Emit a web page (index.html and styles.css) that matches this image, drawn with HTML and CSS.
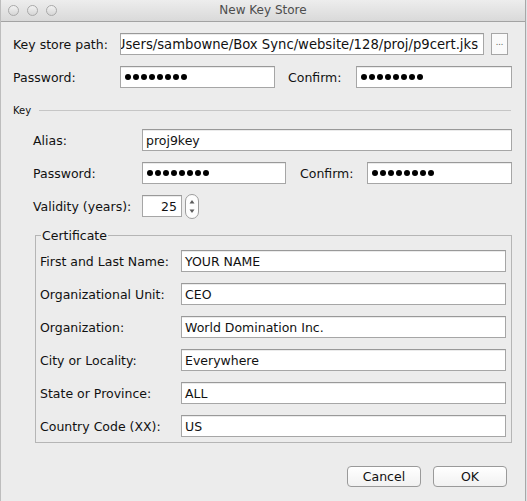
FILE: index.html
```html
<!DOCTYPE html>
<html>
<head>
<meta charset="utf-8">
<title>New Key Store</title>
<link rel="stylesheet" href="styles.css">
</head>
<body>
<div class="window">
  <div class="titlebar">
    <div class="lights"><span class="light"></span><span class="light"></span><span class="light"></span></div>
    <div class="title">New Key Store</div>
  </div>
  <div class="content">
    <div class="row r1">
      <div class="lbl lbl-top">Key store path:</div>
      <div class="field field-path"><span class="path-text">/Users/sambowne/Box Sync/website/128/proj/p9cert.jks</span></div>
      <div class="browse">...</div>
    </div>
    <div class="row r2">
      <div class="lbl lbl-top">Password:</div>
      <div class="field w-pw1"><span class="dots"><i></i><i></i><i></i><i></i><i></i><i></i><i></i><i></i></span></div>
      <div class="lbl lbl-confirm1">Confirm:</div>
      <div class="field w-cf1"><span class="dots"><i></i><i></i><i></i><i></i><i></i><i></i><i></i><i></i></span></div>
    </div>

    <div class="sep">
      <span class="sep-label">Key</span>
      <span class="sep-line"></span>
    </div>

    <div class="key-section">
      <div class="row">
        <div class="lbl lbl-key">Alias:</div>
        <div class="field w-alias">proj9key</div>
      </div>
      <div class="row">
        <div class="lbl lbl-key">Password:</div>
        <div class="field w-pw2"><span class="dots"><i></i><i></i><i></i><i></i><i></i><i></i><i></i><i></i></span></div>
        <div class="lbl lbl-confirm2">Confirm:</div>
        <div class="field w-cf2"><span class="dots"><i></i><i></i><i></i><i></i><i></i><i></i><i></i><i></i></span></div>
      </div>
      <div class="row row-validity">
        <div class="lbl lbl-key">Validity (years):</div>
        <div class="field w-valid">25</div>
        <div class="spinner">
          <svg width="15" height="26" viewBox="0 0 15 26">
            <rect x="0.5" y="0.5" width="13" height="24" rx="6.5" ry="6.5" fill="#fdfdfd" stroke="#9c9c9c"/>
            <path d="M4.5 9.5 L7 6 L9.5 9.5 Z" fill="#5a5a5a"/>
            <path d="M4.5 15.5 L7 19 L9.5 15.5 Z" fill="#5a5a5a"/>
          </svg>
        </div>
      </div>
    </div>

    <fieldset class="cert">
      <legend>Certificate</legend>
      <div class="row"><div class="lbl lbl-cert">First and Last Name:</div><div class="field w-cert">YOUR NAME</div></div>
      <div class="row"><div class="lbl lbl-cert">Organizational Unit:</div><div class="field w-cert">CEO</div></div>
      <div class="row"><div class="lbl lbl-cert">Organization:</div><div class="field w-cert">World Domination Inc.</div></div>
      <div class="row"><div class="lbl lbl-cert">City or Locality:</div><div class="field w-cert">Everywhere</div></div>
      <div class="row"><div class="lbl lbl-cert">State or Province:</div><div class="field w-cert">ALL</div></div>
      <div class="row last"><div class="lbl lbl-cert">Country Code (XX):</div><div class="field w-cert">US</div></div>
    </fieldset>

    <div class="buttons">
      <div class="btn">Cancel</div>
      <div class="btn">OK</div>
    </div>
  </div>
</div>
</body>
</html>
```

FILE: styles.css
```css
html, body {
  margin: 0;
  padding: 0;
}
body {
  background: #dfe3e6;
  font-family: "DejaVu Sans", "Liberation Sans", sans-serif;
  font-size: 12.5px;
  color: #111;
  width: 527px;
  height: 501px;
  overflow: hidden;
}
.window {
  width: 524px;
  height: 501px;
  background: #ececec;
  border-left: 1px solid #bdbdbd;
  border-right: 1px solid #a8a8a8;
  box-sizing: content-box;
}
.titlebar {
  height: 21px;
  border-bottom: 1px solid #a3a3a3;
  background: linear-gradient(#ededed, #d9d9d9);
  display: flex;
  align-items: center;
  position: relative;
}
.lights {
  display: flex;
  gap: 8px;
  padding-left: 7px;
}
.light {
  width: 11px;
  height: 11px;
  border-radius: 50%;
  border: 1px solid #a9a9a9;
  background: linear-gradient(#f2f2f2, #d6d6d6);
  box-sizing: border-box;
}
.title {
  position: absolute;
  left: 0;
  right: 0;
  text-align: center;
  color: #4d4d4d;
  font-size: 12px;
  top: 3px;
}
.content {
  padding: 11px 14px 0 12px;
}
.row {
  display: flex;
  align-items: center;
  height: 22px;
  margin-bottom: 11px;
}
.lbl {
  flex: none;
  white-space: nowrap;
}
.lbl-top { width: 107px; }
.lbl-confirm1 { width: 68px; margin-left: 13px; }
.field {
  flex: none;
  box-sizing: border-box;
  height: 22px;
  background: #fff;
  border: 1px solid #a6a6a6;
  border-top-color: #999;
  box-shadow: inset 0 1px 0 #ebebeb;
  padding: 0 3px;
  display: flex;
  align-items: center;
  white-space: nowrap;
  overflow: hidden;
  font-size: 12.5px;
  color: #111;
}
.field-path {
  width: 364px;
  justify-content: flex-end;
  padding-right: 5px;
  font-size: 13.2px;
}
.browse {
  flex: none;
  width: 17px;
  height: 22px;
  box-sizing: border-box;
  margin-left: 7px;
  border: 1px solid #a6a6a6;
  background: #fafafa;
  font-size: 8px;
  color: #555;
  display: flex;
  align-items: center;
  justify-content: center;
  padding-bottom: 3px;
}
.w-pw1 { width: 155px; }
.w-cf1 { width: 156px; }
.dots {
  display: flex;
  gap: 2px;
  padding-left: 1px;
}
.dots i {
  width: 6px;
  height: 6px;
  border-radius: 50%;
  background: #000;
}
.r2 { margin-bottom: 15px; }
.sep {
  display: flex;
  align-items: center;
  height: 14px;
  margin-bottom: 12px;
}
.sep-label {
  font-size: 10px;
  width: 26px;
  flex: none;
}
.sep-line {
  flex: none;
  width: 472px;
  height: 1px;
  background: #c6c6c6;
}
.key-section {
  padding-left: 20px;
}
.lbl-key { width: 109px; }
.w-alias { width: 370px; }
.w-pw2 { width: 144px; }
.lbl-confirm2 { width: 67px; margin-left: 14px; }
.w-cf2 { width: 145px; }
.w-valid {
  width: 40px;
  justify-content: flex-end;
  padding-right: 4px;
}
.spinner {
  margin-left: 3px;
  height: 26px;
  margin-top: 1px;
}
.row-validity { margin-bottom: 11px; }
.cert {
  margin: 0 0 0 22px;
  width: 477px;
  box-sizing: border-box;
  border: 1px solid #b5b5b5;
  padding: 7px 5px 5px 4px;
}
.cert legend {
  padding: 0 1px;
  margin-left: 1px;
  font-size: 12.5px;
}
.lbl-cert { width: 141px; }
.w-cert { width: 325px; }
.cert .row.last { margin-bottom: 0; }
.buttons {
  display: flex;
  justify-content: flex-end;
  gap: 12px;
  margin-top: 23px;
  margin-right: 4px;
}
.btn {
  width: 74px;
  height: 21px;
  box-sizing: border-box;
  border: 1px solid #9a9a9a;
  border-radius: 4px;
  background: linear-gradient(#ffffff, #f1f1f1);
  display: flex;
  align-items: center;
  justify-content: center;
  font-size: 12.5px;
  color: #111;
}
```
